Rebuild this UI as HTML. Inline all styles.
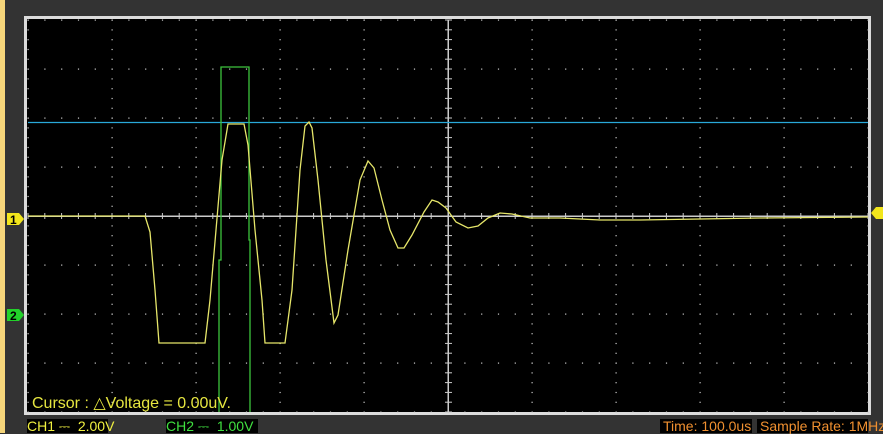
<!DOCTYPE html>
<html><head><meta charset="utf-8"><style>
html,body{margin:0;padding:0;}
body{width:883px;height:433px;background:#333;position:relative;overflow:hidden;font-family:"Liberation Sans",sans-serif;}
.lab{position:absolute;top:419px;height:14px;background:#000;font-size:14px;line-height:15px;white-space:pre;}
</style></head><body>
<div style="position:absolute;left:0;top:0;width:5px;height:433px;background:#f5d57a"></div>
<svg id="s" width="883" height="433" style="position:absolute;left:0;top:0">
<rect x="25.5" y="17.5" width="844" height="396" fill="#000" stroke="#dcdcdc" stroke-width="3"/>
<g id="g" fill="#ccc"></g>
<line x1="28" y1="122.5" x2="868" y2="122.5" stroke="#29a8d8" stroke-width="1.2"/>
<polyline fill="none" stroke="#3cc43c" stroke-width="1.3" points="219,412 219,260 221,260 221,67 249,67 249,240 250,240 250,412"/>
<polyline fill="none" stroke="#e6e66a" stroke-width="1.3" points="28,216 95,216 145,216 150,232 155,290 159,343 175,343 205,343 210,300 216,230 222,160 228,124 244,124 248,145 255,230 262,300 265,343 285,343 292,290 300,170 305,126 309,122 312,128 318,180 326,260 334,323 338,315 348,250 360,180 368,161 374,168 382,200 390,230 398,248 404,248 412,235 424,212 432,200 438,202 446,208 456,222 468,228 478,226 488,218 500,213 512,214 530,218 560,218 600,220 640,220 700,219 760,218 868,217"/>
<path d="M7,213 h12 l5,6 l-5,6 h-12 z" fill="#f2e61c"/>
<text x="10" y="224" font-size="12" font-weight="bold" fill="#000">1</text>
<path d="M7,309 h12 l5,6 l-5,6 h-12 z" fill="#22d22a"/>
<text x="10" y="320" font-size="12" font-weight="bold" fill="#000">2</text>
<path d="M871,213 l5,-6 h7 v12 h-7 z" fill="#f2e61c"/>
<text x="32" y="408" font-size="16" fill="#e6e640">Cursor : △Voltage = 0.00uV.</text>
</svg>
<div class="lab" style="left:27px;width:81px;color:#f0f040">CH1 ⎓  2.00V</div>
<div class="lab" style="left:166px;width:92px;color:#40e040">CH2 ⎓  1.00V</div>
<div class="lab" style="left:660px;width:92px;color:#f09030;padding-left:3px;box-sizing:border-box">Time: 100.0us</div>
<div class="lab" style="left:757px;width:111px;color:#f09030;padding-left:3px;box-sizing:border-box">Sample Rate: 1MHz</div>
<script>
var g=document.getElementById('g'),h='';
var x0=28,y0=20,dx=84,dy=49;
for(var i=0;i<=10;i++){var x=x0+i*dx;for(var j=0;j<=40;j++){var y=y0+j*dy/5;h+='<rect x="'+(x-0.5)+'" y="'+(y-0.5)+'" width="1.2" height="1.2"/>';}}
for(var j=0;j<=8;j++){var y=y0+j*dy;for(var i=0;i<=50;i++){var x=x0+i*dx/5;h+='<rect x="'+(x-0.5)+'" y="'+(y-0.5)+'" width="1.2" height="1.2"/>';}}
h+='<rect x="28" y="215.5" width="840" height="1.5" fill="#ccc"/>';
h+='<rect x="447.5" y="20" width="1.5" height="392" fill="#ccc"/>';
for(var i=0;i<=50;i++){var x=x0+i*dx/5;h+='<rect x="'+(x-0.5)+'" y="213" width="1" height="6" fill="#ccc"/>';}
for(var j=0;j<=40;j++){var y=y0+j*dy/5;h+='<rect x="445" y="'+(y-0.5)+'" width="7" height="1" fill="#ccc"/>';}
g.innerHTML=h;
</script>
</body></html>
